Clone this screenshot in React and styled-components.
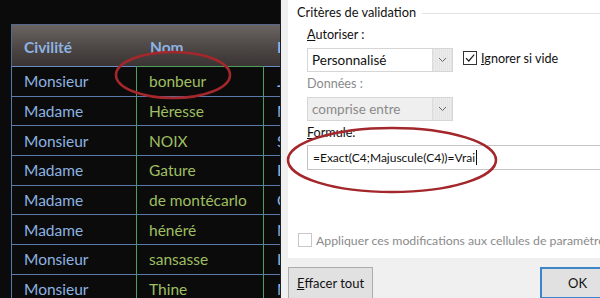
import styled, { createGlobalStyle } from "styled-components";

const rows = [
	["Monsieur", "bonbeur", "Jean"],
	["Madame", "Hèresse", "Marie"],
	["Monsieur", "NOIX", "Serge"],
	["Madame", "Gature", "Emma"],
	["Madame", "de montécarlo", "Claire"],
	["Madame", "hénéré", "Nadia"],
	["Monsieur", "sansasse", "Louis"],
	["Monsieur", "Thine", "Marc"],
];

export default function App() {
	return (
		<>
			<GlobalStyle />
			<Page>
				<Sheet>
					<Table>
						<HeadCell>Civilité</HeadCell>
						<HeadCell>Nom</HeadCell>
						<HeadCell>Prénom</HeadCell>
						{rows.map(([civ, nom, prenom], i) => (
							<Row key={i}>
								<Cell>{civ}</Cell>
								<Cell green first={i === 0}>
									{nom}
								</Cell>
								<Cell>{prenom}</Cell>
							</Row>
						))}
					</Table>
					<Ring width="120" height="50" style={{ left: 113, top: 50 }}>
						<ellipse cx="60" cy="25" rx="57" ry="23" />
					</Ring>
				</Sheet>
				<Dialog>
					<Panel>
						<Legend>
							<span>Critères de validation</span>
						</Legend>
						<Field>
							<Label>
								<u>A</u>utoriser :
							</Label>
							<FieldRow>
								<Select>
									<SelectText>Personnalisé</SelectText>
									<DropButton>
										<Chevron />
									</DropButton>
								</Select>
								<Check>
									<Box>
										<svg width="12" height="12" viewBox="0 0 12 12">
											<path d="M2 6.2 L4.8 9 L10.2 2.6" fill="none" stroke="#222" strokeWidth="1.2" />
										</svg>
									</Box>
									<span>
										<u>I</u>gnorer si vide
									</span>
								</Check>
							</FieldRow>
						</Field>
						<Field>
							<Label disabled>Données :</Label>
							<Select disabled>
								<SelectText>comprise entre</SelectText>
								<DropButton>
									<Chevron />
								</DropButton>
							</Select>
						</Field>
						<Field>
							<Label>
								<u>F</u>ormule:
							</Label>
							<Input>
								=Exact(C4;Majuscule(C4))=Vrai<Caret />
							</Input>
						</Field>
						<Apply>
							<Box disabled />
							<span>Appliquer ces modifications aux cellules de paramètres identiques</span>
						</Apply>
						<Ring width="220" height="70" style={{ left: -7, top: 125 }}>
							<ellipse cx="111" cy="35" rx="104" ry="32" />
						</Ring>
					</Panel>
					<Buttons>
						<Button>
							<u>E</u>ffacer tout
						</Button>
						<Button primary>OK</Button>
					</Buttons>
				</Dialog>
			</Page>
		</>
	);
}

function Chevron() {
	return (
		<svg width="9" height="6" viewBox="0 0 9 6">
			<path d="M1 1 L4.5 4.5 L8 1" fill="none" stroke="#666" strokeWidth="1" />
		</svg>
	);
}

const GlobalStyle = createGlobalStyle`
	html, body {
		margin: 0;
		padding: 0;
		overflow: hidden;
	}
	body {
		width: 600px;
		height: 298px;
	}
`;

const Page = styled.div`
	display: flex;
	width: 600px;
	height: 298px;
	overflow: hidden;
`;

const Sheet = styled.div`
	position: relative;
	width: 281px;
	flex-shrink: 0;
	background: #0b0b0b;
	padding: 24px 0 0 11px;
	box-sizing: border-box;
	overflow: hidden;
	border-right: 1px solid #1e1e1e;
`;

const Table = styled.div`
	display: grid;
	grid-template-columns: 126px 127px 140px;
	grid-template-rows: 43px;
	grid-auto-rows: 29.7px;
	width: 393px;
	font-family: Lato, "Liberation Sans", sans-serif;
	font-size: 15.5px;
`;

const HeadCell = styled.div`
	display: flex;
	align-items: center;
	padding-left: 13px;
	padding-top: 2px;
	font-weight: bold;
	color: #8db3e2;
	background: linear-gradient(#6a6462, #4a4442 60%, #3a3534);
	border-top: 1px solid #56698c;
	border-bottom: 1px solid #6b8bc4;
	&:first-child {
		border-left: 1px solid #56698c;
		padding-left: 12px;
	}
`;

const Row = styled.div`
	display: contents;
`;

const Cell = styled.div`
	display: flex;
	align-items: center;
	padding-left: ${p => (p.green ? "12px" : "13px")};
	color: ${p => (p.green ? "#9fbf62" : "#8db3e2")};
	border-bottom: 1px solid #5c79ad;
	${p => (p.green ? "border-left: 1px solid #4f9e5c; border-right: 1px solid #4f9e5c; margin-left: -1px;" : "")}
	${p => (p.first ? "margin-top: -1px; border-top: 1px solid #4f9e5c;" : "")}
	&:first-child {
		border-left: 1px solid #5c79ad;
		padding-left: 12px;
	}
`;

const Ring = styled.svg`
	position: absolute;
	overflow: visible;
	pointer-events: none;
	ellipse {
		fill: none;
		stroke: #a3272b;
		stroke-width: 2.6;
	}
`;

const Dialog = styled.div`
	flex: 1;
	min-width: 0;
	overflow: hidden;
	display: flex;
	flex-direction: column;
	background: #f0f0f0;
	padding-left: 7px;
	font-family: Lato, "Noto Sans", sans-serif;
	font-size: 12.6px;
	color: #111;
`;

const Panel = styled.div`
	position: relative;
	flex-shrink: 0;
	height: 258px;
	background: #fff;
	padding: 3px 0 0 9px;
	box-sizing: border-box;
	display: flex;
	flex-direction: column;
`;

const Legend = styled.div`
	display: flex;
	align-items: center;
	gap: 6px;
	height: 18px;
	font-size: 12.8px;
	&::after {
		content: "";
		flex: 1;
		height: 1px;
		margin-top: 2px;
		background: #e2e2e2;
	}
`;

const Field = styled.div`
	display: flex;
	flex-direction: column;
	padding-left: 10px;
	margin-top: 4px;
	&:nth-child(2) {
		margin-top: 6px;
	}
`;

const Label = styled.div`
	height: 16px;
	line-height: 16px;
	color: ${p => (p.disabled ? "#8a8a8a" : "#111")};
	margin-bottom: 5px;
`;

const FieldRow = styled.div`
	display: flex;
	align-items: center;
	gap: 10px;
`;

const Select = styled.div`
	display: flex;
	width: 146px;
	height: 24px;
	box-sizing: border-box;
	border: 1px solid #d6d6d6;
	font-size: 13.5px;
	background: ${p => (p.disabled ? "#efefef" : "#fff")};
	color: ${p => (p.disabled ? "#8a8a8a" : "#111")};
`;

const SelectText = styled.div`
	flex: 1;
	display: flex;
	align-items: center;
	padding-left: 4px;
`;

const DropButton = styled.div`
	width: 19px;
	display: flex;
	align-items: center;
	justify-content: center;
	background: repeating-linear-gradient(90deg, #e4e4e4 0 1px, #ececec 1px 2px);
	border-left: 1px solid #dcdcdc;
`;

const Check = styled.label`
	display: flex;
	align-items: center;
	gap: 4px;
	margin-top: -4px;
	font-size: 12.6px;
`;

const Box = styled.span`
	display: flex;
	flex-shrink: 0;
	align-items: center;
	justify-content: center;
	width: 14px;
	height: 14px;
	box-sizing: border-box;
	border: 1px solid ${p => (p.disabled ? "#c8c8c8" : "#333")};
	background: #fff;
`;

const Input = styled.div`
	display: flex;
	align-items: center;
	height: 25px;
	margin-top: -1px;
	box-sizing: border-box;
	border: 1px solid #c4c4c4;
	border-right: none;
	padding-left: 5px;
	font-size: 12px;
	white-space: nowrap;
`;

const Caret = styled.span`
	display: inline-block;
	width: 1px;
	height: 15px;
	background: #111;
	margin-left: 1px;
`;

const Apply = styled.div`
	display: flex;
	align-items: center;
	gap: 4px;
	height: 14px;
	margin-top: 63px;
	padding-left: 1px;
	color: #8a8a8a;
	font-size: 12.3px;
	white-space: nowrap;
`;

const Buttons = styled.div`
	display: flex;
	justify-content: space-between;
	padding: 9px 0 0 0;
`;

const Button = styled.div`
	display: flex;
	flex-shrink: 0;
	align-items: center;
	justify-content: center;
	width: ${p => (p.primary ? "75px" : "85px")};
	height: 32px;
	box-sizing: border-box;
	margin-right: ${p => (p.primary ? "-15px" : "0")};
	background: #e1e1e1;
	border: ${p => (p.primary ? "2px solid #3a86c9" : "1px solid #adadad")};
	font-size: 13px;
`;
